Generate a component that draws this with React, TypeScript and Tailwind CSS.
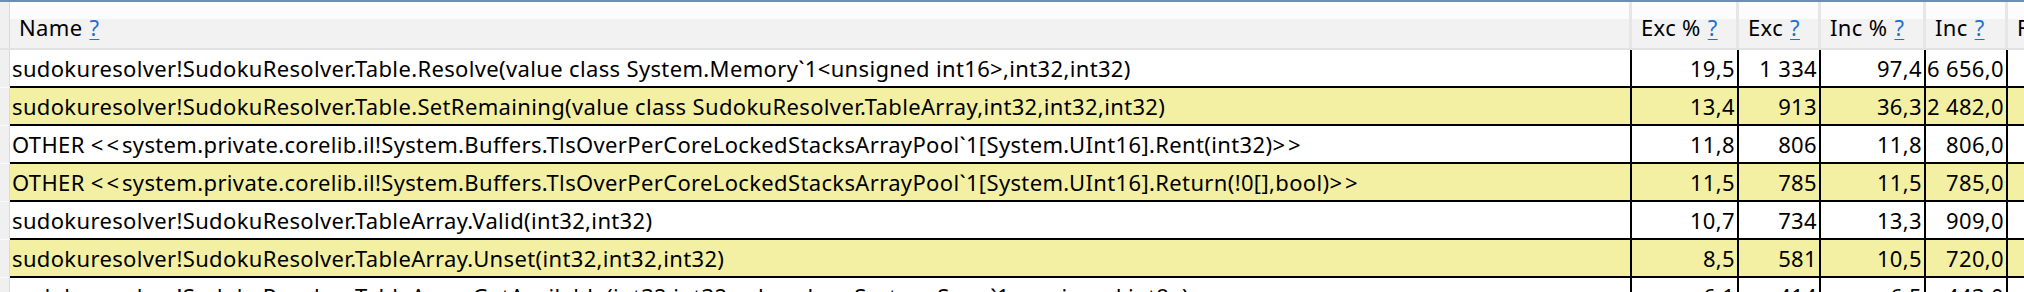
import React from 'react'

type Row = {
  name: string
  excPct: string
  exc: string
  incPct: string
  inc: string
}

const rows: Row[] = [
  { name: 'sudokuresolver!SudokuResolver.Table.Resolve(value class System.Memory`1<unsigned int16>,int32,int32)', excPct: '19,5', exc: '1 334', incPct: '97,4', inc: '6 656,0' },
  { name: 'sudokuresolver!SudokuResolver.Table.SetRemaining(value class SudokuResolver.TableArray,int32,int32,int32)', excPct: '13,4', exc: '913', incPct: '36,3', inc: '2 482,0' },
  { name: 'OTHER <<system.private.corelib.il!System.Buffers.TlsOverPerCoreLockedStacksArrayPool`1[System.UInt16].Rent(int32)>>', excPct: '11,8', exc: '806', incPct: '11,8', inc: '806,0' },
  { name: 'OTHER <<system.private.corelib.il!System.Buffers.TlsOverPerCoreLockedStacksArrayPool`1[System.UInt16].Return(!0[],bool)>>', excPct: '11,5', exc: '785', incPct: '11,5', inc: '785,0' },
  { name: 'sudokuresolver!SudokuResolver.TableArray.Valid(int32,int32)', excPct: '10,7', exc: '734', incPct: '13,3', inc: '909,0' },
  { name: 'sudokuresolver!SudokuResolver.TableArray.Unset(int32,int32,int32)', excPct: '8,5', exc: '581', incPct: '10,5', inc: '720,0' },
  { name: 'sudokuresolver!SudokuResolver.TableArray.GetAvailable(int32,int32,value class System.Span`1<unsigned int8>)', excPct: '6,1', exc: '414', incPct: '6,5', inc: '443,0' },
]

// Segoe-style wide angle brackets: give "<<" / ">>" a bit of air
function FrameName({ text }: { text: string }) {
  const parts = text.split(/(<<|>>)/)
  return (
    <>
      {parts.map((p, i) =>
        p === '<<' || p === '>>' ? (
          <span key={i} className="tracking-[3px]">{p}</span>
        ) : (
          <React.Fragment key={i}>{p}</React.Fragment>
        )
      )}
    </>
  )
}

function Help() {
  return <span className="ml-[7px] text-[#1f6fd0] underline underline-offset-[3px] decoration-1">?</span>
}

function HeaderCell({ label, className }: { label: string; className: string }) {
  return (
    <div className={`h-full shrink-0 border-r-[3px] border-[#e6e6e6] pl-[9px] pt-[11px] leading-[28px] whitespace-nowrap overflow-hidden ${className}`}>
      {label}
      <Help />
    </div>
  )
}

function NumCell({ value, className }: { value: string; className: string }) {
  return (
    <div className={`h-full shrink-0 border-r-2 border-black pr-[2px] text-right leading-[36px] whitespace-nowrap ${className}`}>
      {value}
    </div>
  )
}

export default function App() {
  return (
    <div className="w-[2024px] h-[292px] overflow-hidden bg-white text-black text-[22px] tracking-[0.35px] font-['Noto_Sans','Open_Sans',sans-serif] border-t-2 border-[#6e8db0]">
      {/* header */}
      <div className="flex h-[48px] border-b-2 border-[#e2e2e2] bg-[linear-gradient(to_bottom,#fcfcfc_0%,#fcfcfc_36%,#f2f2f3_36%,#f2f2f3_100%)]">
        <div className="w-[10px] h-full shrink-0 bg-[#f0f0f0] border-r border-[#dadada]" />
        <HeaderCell label="Name" className="w-[1622px]" />
        <HeaderCell label="Exc %" className="w-[107px]" />
        <HeaderCell label="Exc" className="w-[82px]" />
        <HeaderCell label="Inc %" className="w-[105px]" />
        <HeaderCell label="Inc" className="w-[82px]" />
        <HeaderCell label="Fold" className="w-[120px]" />
      </div>

      {/* rows */}
      {rows.map((r, i) => (
        <div
          key={i}
          className={`flex h-[38px] ${i % 2 === 1 ? 'bg-[#f3f0a4]' : 'bg-white'}`}
        >
          <div className="w-[10px] h-full shrink-0 bg-[#f0f0f0] border-r border-b border-r-[#dadada] border-b-[#fafafa]" />
          <div className="flex h-full border-b-2 border-black">
            <div className="w-[1622px] h-full shrink-0 border-r-2 border-black pl-[2px] leading-[36px] whitespace-nowrap overflow-hidden">
              <FrameName text={r.name} />
            </div>
            <NumCell value={r.excPct} className="w-[107px]" />
            <NumCell value={r.exc} className="w-[82px]" />
            <NumCell value={r.incPct} className="w-[105px]" />
            <NumCell value={r.inc} className="w-[82px]" />
            <div className="w-[120px] h-full shrink-0" />
          </div>
        </div>
      ))}
    </div>
  )
}
